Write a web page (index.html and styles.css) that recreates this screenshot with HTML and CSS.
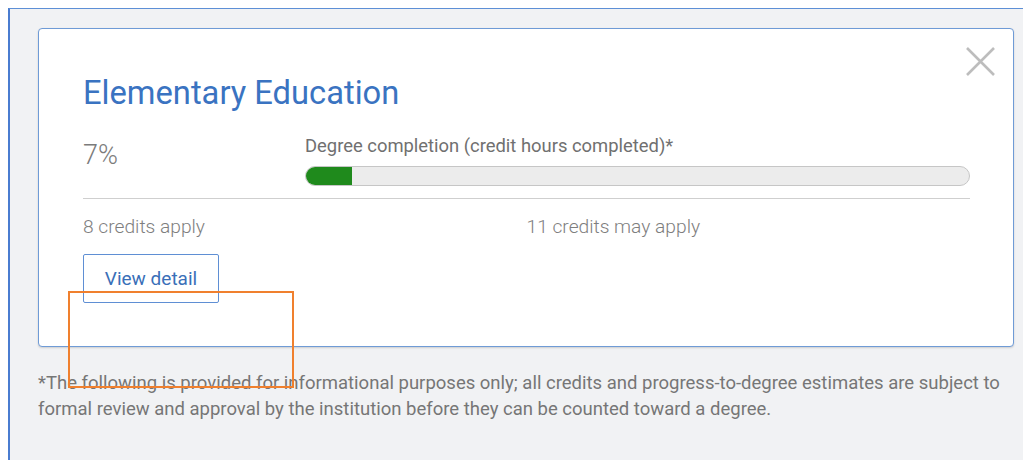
FILE: index.html
```html
<!DOCTYPE html>
<html lang="en">
<head>
<meta charset="utf-8">
<title>Elementary Education</title>
<link rel="stylesheet" href="styles.css">
</head>
<body>
<div class="frame">
  <section class="card">
    <button class="close" aria-label="Close">
      <svg width="31" height="31" viewBox="0 0 31 31"><path d="M2 2 L29 29 M29 2 L2 29" stroke="#bdbdbd" stroke-width="2.6" fill="none"/></svg>
    </button>
    <h2 class="title">Elementary Education</h2>
    <div class="progress-row">
      <div class="pct">7%</div>
      <div class="completion">
        <div class="label">Degree completion (credit hours completed)*</div>
        <div class="bar"><div class="fill" style="width: 7%"></div></div>
      </div>
    </div>
    <hr class="divider">
    <div class="credits-row">
      <div class="credits">8 credits apply</div>
      <div class="credits">11 credits may apply</div>
    </div>
    <button class="detail">View detail</button>
  </section>
  <p class="note">*The following is provided for informational purposes only; all credits and progress-to-degree estimates are subject to formal review and approval by the institution before they can be counted toward a degree.</p>
</div>
<div class="highlight"></div>
</body>
</html>
```

FILE: styles.css
```css
html, body {
  margin: 0;
  background: #ffffff;
  font-family: Roboto, "Noto Sans", sans-serif;
}

body {
  position: relative;
  height: 461px;
  overflow: hidden;
}

.frame {
  margin: 8px 0 0 8px;
  border-left: 2px solid #4a7cd0;
  border-top: 1px solid #5d8fd6;
  background: #f1f2f4;
  padding: 19px 9px 0 28px;
  height: 452px;
  box-sizing: border-box;
}

.card {
  position: relative;
  background: #fff;
  border: 1px solid #6f9bd6;
  border-radius: 4px;
  box-shadow: 0 1px 2px rgba(0, 0, 0, 0.15);
  padding: 46px 43px 43px 44px;
}

.close {
  position: absolute;
  top: 17px;
  right: 17px;
  border: 0;
  background: none;
  padding: 0;
  width: 31px;
  height: 31px;
  cursor: pointer;
}

.close svg {
  display: block;
}

.title {
  margin: 0;
  font-size: 32.7px;
  line-height: 36px;
  font-weight: 400;
  color: #3a73c1;
}

.progress-row {
  display: grid;
  grid-template-columns: 222px 1fr;
  margin-top: 25px;
}

.pct {
  font-size: 27px;
  line-height: 30px;
  font-weight: 300;
  color: #7b7b7b;
  margin-top: 4px;
}

.label {
  font-size: 18.4px;
  line-height: 20px;
  color: #707070;
}

.bar {
  margin-top: 10px;
  height: 20px;
  box-sizing: border-box;
  border: 1px solid #c6c6c6;
  border-radius: 10px;
  background: #ececec;
  overflow: hidden;
}

.fill {
  height: 100%;
  background: #1f8a1c;
}

.divider {
  margin: 12px 0 0;
  border: 0;
  border-top: 1px solid #cfcfcf;
  height: 0;
}

.credits-row {
  display: grid;
  grid-template-columns: 1fr 1fr;
  margin-top: 16px;
}

.credits {
  font-size: 19.2px;
  line-height: 24px;
  font-weight: 300;
  color: #7e7e7e;
}

.detail {
  display: block;
  margin-top: 15px;
  width: 136px;
  height: 49px;
  border: 1px solid #5f8fd4;
  border-radius: 2px;
  background: #fff;
  color: #3a6fb8;
  font-family: Roboto, "Noto Sans", sans-serif;
  font-size: 19px;
  padding: 0;
  cursor: pointer;
}

.note {
  margin: 23px 0 0 0;
  font-size: 18.5px;
  line-height: 26px;
  color: #767676;
}

.highlight {
  position: absolute;
  left: 68px;
  top: 291px;
  width: 226px;
  height: 97px;
  box-sizing: border-box;
  border: 2px solid #f0802e;
  pointer-events: none;
}
```
